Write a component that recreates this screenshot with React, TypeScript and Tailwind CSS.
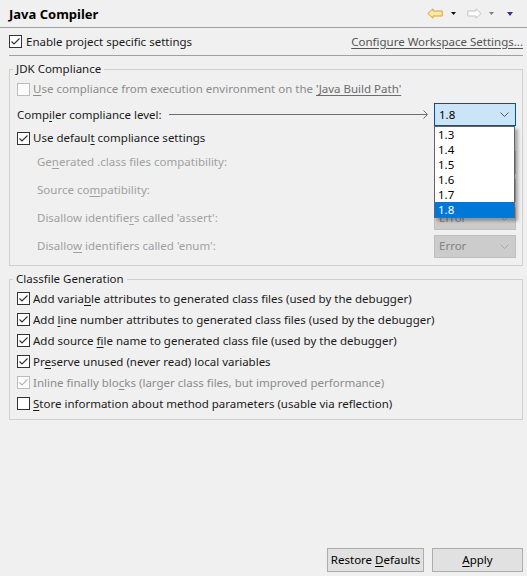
import { ReactNode } from "react"

// Small 13px checkbox in the Windows style
function Check({ checked, disabled }: { checked?: boolean; disabled?: boolean }) {
  const border = disabled ? "border-[#bcbcbc] bg-[#fcfcfc]" : "border-[#333333] bg-white"
  return (
    <span className={`w-[13px] h-[13px] border ${border} flex items-center justify-center shrink-0`}>
      {checked && (
        <svg width="11" height="11" viewBox="0 0 11 11">
          <path d="M1.5 5.5 L4 8 L9.5 2.5" fill="none" stroke={disabled ? "#b5b5b5" : "#333"} strokeWidth="1.2" />
        </svg>
      )}
    </span>
  )
}

function Chevron({ color }: { color: string }) {
  return (
    <svg width="9" height="5" viewBox="0 0 9 5">
      <path d="M0.5 0.5 L4.5 4.5 L8.5 0.5" fill="none" stroke={color} strokeWidth="1" />
    </svg>
  )
}

function ErrorCombo() {
  return (
    <div className="w-[82px] h-[23px] border border-[#bfbfbf] bg-[#cccccc] flex items-center justify-between pl-[4px] pr-[6px] text-[#838383]">
      <span>Error</span>
      <Chevron color="#a8a8a8" />
    </div>
  )
}

function CheckRow({ checked, disabled, children }: { checked?: boolean; disabled?: boolean; children: ReactNode }) {
  return (
    <div className={`h-[21px] flex items-center gap-[3px] ${disabled ? "text-[#8c8c8c]" : "text-[#1a1a1a]"}`}>
      <Check checked={checked} disabled={disabled} />
      <span>{children}</span>
    </div>
  )
}

function DisabledRow({ children }: { children: ReactNode }) {
  return (
    <div className="h-[28px] flex items-center justify-between pl-[20px] text-[#a0a0a0]">
      <span>{children}</span>
      <ErrorCombo />
    </div>
  )
}

const u = "underline underline-offset-[2px]"

export default function App() {
  const versions = ["1.3", "1.4", "1.5", "1.6", "1.7", "1.8"]

  return (
    <div
      className="w-[527px] h-[576px] bg-[#f0f0f0] flex flex-col text-[11.5px] leading-[16px] text-[#1a1a1a]"
      style={{ fontFamily: '"Noto Sans", "Noto Sans CJK KR", sans-serif' }}
    >
      {/* Header */}
      <div className="h-[28px] flex items-center justify-between pl-[9px] pr-[14px] border-b border-[#a0a0a0]">
        <span className="font-bold text-[13px] text-black">Java Compiler</span>
        <div className="flex items-center">
          <svg width="16" height="11" viewBox="0 0 16 11">
            <path d="M0.8 5.5 L6 0.8 L6 3 L15.2 3 L15.2 8 L6 8 L6 10.2 Z" fill="#fdeaa8" stroke="#d9a12a" strokeWidth="1" />
          </svg>
          <svg className="ml-[8px]" width="5" height="3" viewBox="0 0 5 3">
            <path d="M0 0 L5 0 L2.5 3 Z" fill="#111" />
          </svg>
          <svg className="ml-[11px]" width="15" height="11" viewBox="0 0 15 11">
            <path d="M14.2 5.5 L9 0.8 L9 3 L0.8 3 L0.8 8 L9 8 L9 10.2 Z" fill="#fdfdfd" stroke="#c4c4c4" strokeWidth="1" />
          </svg>
          <svg className="ml-[7px]" width="5" height="3" viewBox="0 0 5 3">
            <path d="M0 0 L5 0 L2.5 3 Z" fill="#808080" />
          </svg>
          <svg className="ml-[13px]" width="6" height="4" viewBox="0 0 6 4">
            <path d="M0 0 L6 0 L3 4 Z" fill="#4a2a86" />
          </svg>
        </div>
      </div>

      {/* Enable row */}
      <div className="h-[27px] flex items-center justify-between pl-[9px] pr-[4px]">
        <div className="flex items-center gap-[4px]">
          <Check checked />
          <span>
            Enable pro<span className={u}>j</span>ect specific settings
          </span>
        </div>
        <span className="underline underline-offset-[2px] text-[#555]">Configure Workspace Settings...</span>
      </div>
      <div className="ml-[9px] mr-[4px] h-px bg-[#a0a0a0]" />

      {/* JDK Compliance */}
      <fieldset className="mt-[5px] ml-[9px] mr-[4px] border border-[#d0d0d0] pl-[7px] pr-[6px] pb-[5px]">
        <legend className="-ml-[4px] px-[3px]">JDK Compliance</legend>
        <div className="h-[24px] flex items-center gap-[3px] text-[#8c8c8c]">
          <Check disabled />
          <span>
            <span className={u}>U</span>se compliance from execution environment on the{" "}
            <span className="underline underline-offset-[2px] text-[#6d6d6d]">'Java Build Path'</span>
          </span>
        </div>
        <div className="h-[27px] flex items-center">
          <span>
            Comp<span className={u}>i</span>ler compliance level:
          </span>
          <div className="flex-1 flex items-center ml-[7px] mr-[6px]">
            <div className="flex-1 h-px bg-[#6d6d6d]" />
            <svg className="-ml-[4px]" width="5" height="9" viewBox="0 0 5 9">
              <path d="M0.5 0.5 L4.5 4.5 L0.5 8.5" fill="none" stroke="#6d6d6d" strokeWidth="1" />
            </svg>
          </div>
          <div className="relative">
            <div className="w-[82px] h-[23px] border border-[#005499] bg-[#cce4f7] flex items-center justify-between pl-[4px] pr-[6px] text-black">
              <span>1.8</span>
              <Chevron color="#555" />
            </div>
            <div className="absolute top-full left-0 w-[81px] z-10 bg-white border border-[#646464] shadow-[3px_3px_3px_rgba(0,0,0,0.3)]">
              {versions.map((v) => (
                <div
                  key={v}
                  className={`h-[15px] leading-[15px] pl-[3px] ${v === "1.8" ? "bg-[#0078d7] text-white" : "text-black"}`}
                >
                  {v}
                </div>
              ))}
            </div>
          </div>
        </div>
        <div className="h-[20px] flex items-center gap-[3px]">
          <Check checked />
          <span>
            Use defaul<span className={u}>t</span> compliance settings
          </span>
        </div>
        <div>
          <DisabledRow>
            Ge<span className={u}>n</span>erated .class files compatibility:
          </DisabledRow>
          <DisabledRow>
            Source co<span className={u}>m</span>patibility:
          </DisabledRow>
          <DisabledRow>
            Disallow identifie<span className={u}>r</span>s called 'assert':
          </DisabledRow>
          <DisabledRow>
            Disallo<span className={u}>w</span> identifiers called 'enum':
          </DisabledRow>
        </div>
      </fieldset>

      {/* Classfile Generation */}
      <fieldset className="mt-[5px] ml-[9px] mr-[4px] border border-[#d0d0d0] px-[7px] pb-[5px]">
        <legend className="-ml-[4px] px-[3px]">Classfile Generation</legend>
        <div className="pt-[1px]">
          <CheckRow checked>
            Add varia<span className={u}>b</span>le attributes to generated class files (used by the debugger)
          </CheckRow>
          <CheckRow checked>
            Add <span className={u}>l</span>ine number attributes to generated class files (used by the debugger)
          </CheckRow>
          <CheckRow checked>
            Add source <span className={u}>f</span>ile name to generated class file (used by the debugger)
          </CheckRow>
          <CheckRow checked>
            Pr<span className={u}>e</span>serve unused (never read) local variables
          </CheckRow>
          <CheckRow checked disabled>
            Inline finally blo<span className={u}>c</span>ks (larger class files, but improved performance)
          </CheckRow>
          <CheckRow>
            <span className={u}>S</span>tore information about method parameters (usable via reflection)
          </CheckRow>
        </div>
      </fieldset>

      {/* Buttons */}
      <div className="mt-auto flex justify-end gap-[8px] pr-[4px] pb-[4px]">
        <button className="w-[97px] h-[24px] border border-[#adadad] bg-[#e1e1e1] text-black">
          Restore <span className={u}>D</span>efaults
        </button>
        <button className="w-[91px] h-[24px] border border-[#adadad] bg-[#e1e1e1] text-black">
          <span className={u}>A</span>pply
        </button>
      </div>
    </div>
  )
}
